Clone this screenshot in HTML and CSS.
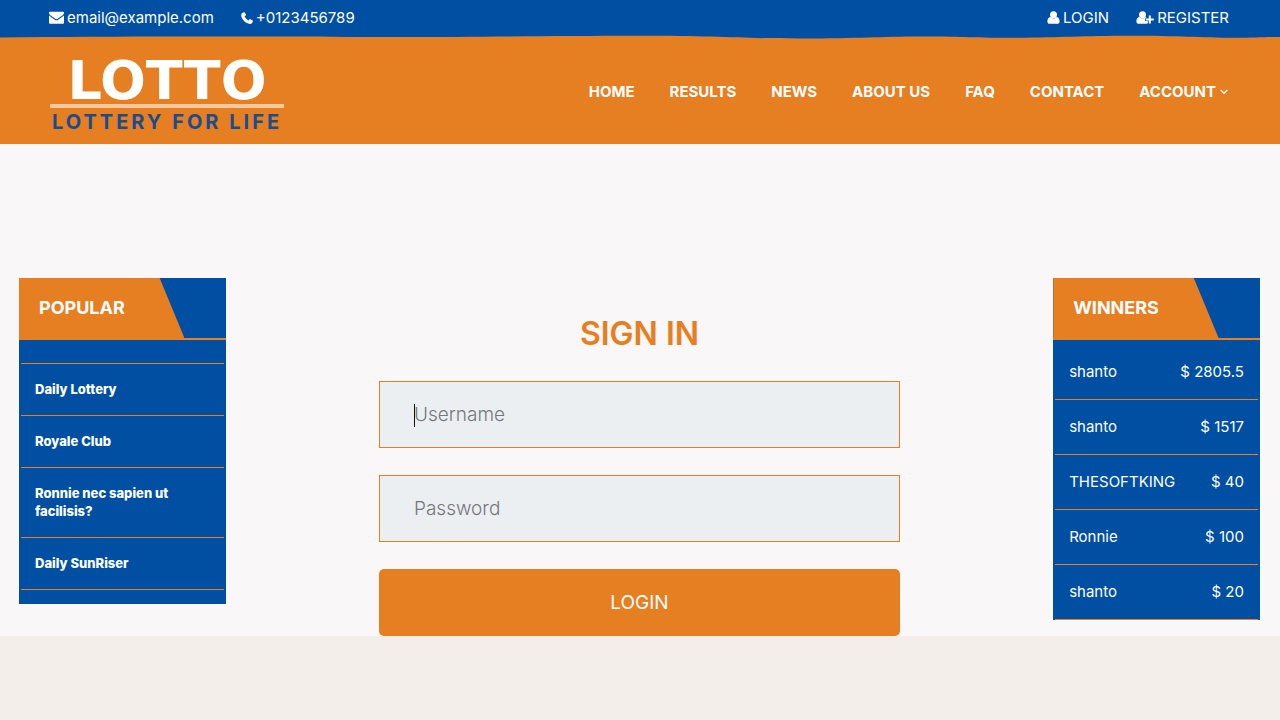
FILE: index.html
```html
<!DOCTYPE html>
<html lang="en">
<head>
<meta charset="utf-8">
<meta name="viewport" content="width=device-width, initial-scale=1">
<title>Lotto - Sign in</title>
<link rel="stylesheet" href="styles.css">
</head>
<body>
<header class="site-header">
  <div class="topbar">
    <div class="topbar-group">
      <a class="topbar-link" href="#"><svg class="icon" width="15" height="13" viewBox="0 0 15 13" aria-hidden="true"><path d="M1 .8h13a1 1 0 0 1 1 1C15 3 14.300 3.900 13.300 4.600L9 7.600C8.400 8 8 8.300 7.500 8.300S6.600 8 6 7.600L1.700 4.600C.7 3.900 0 3 0 1.800a1 1 0 0 1 1-1z"/><path d="M0 4.500C.4 4.900.8 5.200 1.300 5.500L5.500 8.400C6.200 8.900 6.900 9.300 7.500 9.300S8.800 8.900 9.500 8.400L13.700 5.500C14.200 5.200 14.600 4.900 15 4.500V11.700a1 1 0 0 1-1 1H1a1 1 0 0 1-1-1z"/></svg>email@example.com</a>
      <a class="topbar-link" href="#"><svg class="icon" width="12" height="12" viewBox="0 0 12 12" aria-hidden="true"><path d="M3.300.2C2.800.2 1.900.5 1.400.8.600 1.400.2 2.300.2 3.300c0 1 .4 1.900.8 3C1.700 7.900 4.200 10.400 5.800 11.100c1 .5 2 .8 3 .8 1 0 1.900-.4 2.500-1.200.3-.5.600-1.300.600-1.900 0-.2-.1-.3-.2-.4L9 7c-.4 0-1.200 1.500-1.600 1.500-.5 0-3.800-3.300-3.800-3.900 0-.4 1.500-1.100 1.500-1.500L3.700.4C3.600.2 3.400.2 3.300.2z"/></svg>+0123456789</a>
    </div>
    <div class="topbar-group">
      <a class="topbar-link" href="#"><svg class="icon" width="13" height="13" viewBox="0 0 13 13" aria-hidden="true"><circle cx="6.500" cy="3.700" r="3.500"/><path d="M3.300 5.900C1.300 6.100.4 7.900.4 10.400c0 1.500 1 2.400 2.300 2.400h7.600c1.300 0 2.300-.9 2.300-2.400 0-2.500-.9-4.300-2.900-4.500-.9.900-2 1.400-3.200 1.400s-2.300-.5-3.200-1.400z"/></svg>LOGIN</a>
      <a class="topbar-link" href="#"><svg class="icon" width="18" height="13" viewBox="0 0 18 13" aria-hidden="true"><circle cx="6.500" cy="3.700" r="3.500"/><path d="M3.300 5.900C1.300 6.100.4 7.900.4 10.400c0 1.500 1 2.400 2.300 2.400h7.600c.6 0 1.100-.2 1.500-.5V10H9V7.300h1.500l-.8-1.400c-.9.900-2 1.400-3.200 1.400s-2.300-.5-3.200-1.400z"/><path d="M12.800 4.500h2v3h3v2h-3v3h-2v-3h-3v-2h3z"/></svg>REGISTER</a>
    </div>
  </div>
  <svg class="wave" viewBox="0 0 1280 4" preserveAspectRatio="none" aria-hidden="true"><path d="M0 0V2.500C120 .8 260 1.500 360 2C480 2.300 540 .8 640 .8C720 .8 740 3.500 800 3.500C860 3.500 880 1.500 920 1.500C960 1.500 970 2.800 1010 2.800C1060 2.800 1080 .8 1130 .8C1180 .8 1200 2.800 1235 2.800C1255 2.800 1265 2 1280 2V0z"/></svg>
  <div class="navbar">
    <a class="logo" href="#">
      <span class="logo-name">LOTTO</span>
      <span class="logo-tagline">LOTTERY FOR LIFE</span>
    </a>
    <nav class="menu">
      <a class="menu-link" href="#">HOME</a>
      <a class="menu-link" href="#">RESULTS</a>
      <a class="menu-link" href="#">NEWS</a>
      <a class="menu-link" href="#">ABOUT US</a>
      <a class="menu-link" href="#">FAQ</a>
      <a class="menu-link" href="#">CONTACT</a>
      <a class="menu-link" href="#">ACCOUNT<svg class="chevron" width="8" height="6" viewBox="0 0 8 6" aria-hidden="true"><path d="M.8 1l3.200 3.300L7.200 1"/></svg></a>
    </nav>
  </div>
</header>
<main class="content">
  <aside class="panel">
    <div class="panel-head"><h2 class="panel-title">POPULAR</h2></div>
    <ul class="popular">
      <li class="popular-item popular-item-empty"></li>
      <li class="popular-item"><a class="popular-link" href="#">Daily Lottery</a></li>
      <li class="popular-item"><a class="popular-link" href="#">Royale Club</a></li>
      <li class="popular-item"><a class="popular-link" href="#">Ronnie nec sapien ut facilisis?</a></li>
      <li class="popular-item"><a class="popular-link" href="#">Daily SunRiser</a></li>
    </ul>
  </aside>
  <form class="signin">
    <h1 class="signin-title">SIGN IN</h1>
    <div class="field">
      <input class="field-input" type="text" placeholder="Username" aria-label="Username">
      <span class="caret"></span>
    </div>
    <div class="field">
      <input class="field-input" type="password" placeholder="Password" aria-label="Password">
    </div>
    <button class="signin-button" type="button">LOGIN</button>
  </form>
  <aside class="panel">
    <div class="panel-head"><h2 class="panel-title">WINNERS</h2></div>
    <ol class="winners">
      <li class="winner"><span>shanto</span><span>$ 2805.5</span></li>
      <li class="winner"><span>shanto</span><span>$ 1517</span></li>
      <li class="winner"><span>THESOFTKING</span><span>$ 40</span></li>
      <li class="winner"><span>Ronnie</span><span>$ 100</span></li>
      <li class="winner"><span>shanto</span><span>$ 20</span></li>
    </ol>
  </aside>
</main>
</body>
</html>
```
FILE: styles.css
```css
:root {
  --blue: #004fa3;
  --orange: #e67e22;
}

* {
  box-sizing: border-box;
}

body {
  margin: 0;
  min-height: 100vh;
  background: #f3eee9;
  color: #fff;
  font-family: Inter, "Open Sans", sans-serif;
}

a {
  color: inherit;
  text-decoration: none;
}

ul, ol, h1, h2 {
  margin: 0;
  padding: 0;
  list-style: none;
}

.site-header {
  background: var(--orange);
}

.topbar {
  display: flex;
  justify-content: space-between;
  padding: 0 51px 0 49px;
  background: var(--blue);
  font-size: 15px;
  line-height: 35px;
}

.topbar-group {
  display: flex;
  gap: 27px;
}

.topbar-link {
  display: flex;
  align-items: center;
  gap: 3px;
}

.icon {
  fill: currentColor;
}

.wave {
  display: block;
  width: 100%;
  height: 4px;
  fill: var(--blue);
}

.navbar {
  display: flex;
  align-items: center;
  justify-content: space-between;
  min-height: 105px;
  padding: 0 52px 0 50px;
}

.logo {
  display: flex;
  flex-direction: column;
  align-items: center;
  width: 234px;
  padding-top: 10px;
}

.logo-name {
  width: 100%;
  border-bottom: 4px solid #f6c9a0;
  font-family: "DejaVu Sans", sans-serif;
  font-size: 54px;
  font-weight: 700;
  line-height: 46px;
  text-align: center;
}

.logo-tagline {
  color: #1a4c8f;
  font-size: 20px;
  font-weight: 700;
  letter-spacing: 3px;
  line-height: 28px;
  white-space: nowrap;
}

.menu {
  display: flex;
  gap: 35px;
  font-size: 15px;
  font-weight: 700;
}

.menu-link {
  display: flex;
  align-items: center;
  gap: 4px;
  white-space: nowrap;
}

.chevron {
  fill: none;
  stroke: currentColor;
  stroke-width: 1.3;
}

.content {
  display: grid;
  grid-template-columns: 2fr 8fr 2fr;
  align-items: start;
  padding: 134px 20px 0 19px;
  background: #f9f7f8;
}

.panel {
  background: var(--blue);
}

.panel-head {
  border-bottom: 2px solid var(--orange);
}

.panel-title {
  width: 80%;
  padding-left: 20px;
  background: var(--orange);
  clip-path: polygon(0 0, 85% 0, 100% 100%, 0 100%);
  font-size: 18px;
  font-weight: 700;
  line-height: 60px;
}

.popular {
  padding: 0 2px 14px;
}

.popular-item {
  padding: 16px 14px 17px;
  border-bottom: 1px solid var(--orange);
  font-size: 13px;
  font-weight: 800;
  line-height: 18px;
}

.popular-item-empty {
  height: 24px;
  padding: 0;
}

.winners {
  padding: 5px 2px 0;
}

.winner {
  display: flex;
  justify-content: space-between;
  padding: 0 14px;
  border-bottom: 1px solid var(--orange);
  font-size: 15px;
  line-height: 54px;
}

.signin {
  display: flex;
  flex-direction: column;
  gap: 27px;
  justify-self: center;
  width: 100%;
  max-width: 521px;
  padding-top: 35px;
}

.signin-title {
  color: var(--orange);
  font-size: 32px;
  font-weight: 600;
  line-height: 41px;
  text-align: center;
}

.field {
  position: relative;
  display: flex;
}

.field-input {
  width: 100%;
  height: 67px;
  padding: 0 34px;
  border: 1px solid var(--orange);
  border-radius: 0;
  background: #ebeff2;
  color: #333;
  font: 300 19px Inter, "Open Sans", sans-serif;
}

.field-input::placeholder {
  color: #75787b;
  opacity: 1;
}

.caret {
  position: absolute;
  top: 23px;
  left: 35px;
  width: 1px;
  height: 23px;
  background: #111;
}

.signin-button {
  height: 67px;
  border: 0;
  border-radius: 5px;
  background: var(--orange);
  color: #fff;
  font: 400 19px Inter, "Open Sans", sans-serif;
}
```
